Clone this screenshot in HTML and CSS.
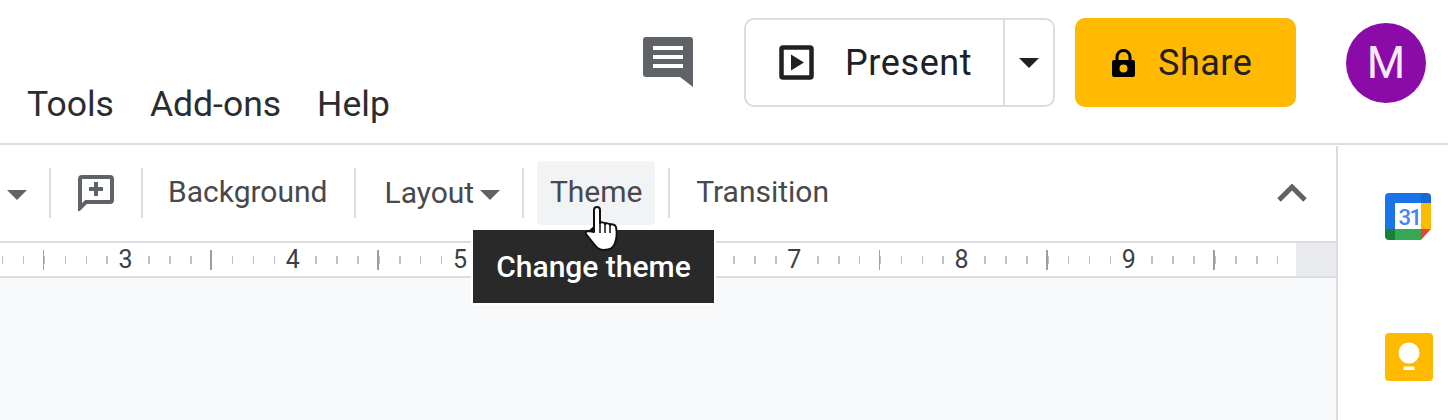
FILE: index.html
```html
<!DOCTYPE html>
<html lang="en">
<head>
    <meta charset="UTF-8">
    <title>Slides toolbar</title>
    <link rel="stylesheet" href="styles.css">
</head>
<body>
    <header class="topbar">
        <nav class="menu">
            <span>Tools</span>
            <span>Add-ons</span>
            <span>Help</span>
        </nav>
        <div class="actions">
            <svg class="comment-icon" viewBox="0 0 50 50">
                <path fill="#5f6368" d="M3 0h44a3 3 0 0 1 3 3v47L37 40H3a3 3 0 0 1-3-3V3a3 3 0 0 1 3-3z"/>
                <path fill="#fff" d="M10 9h30v4H10zM10 18h30v4H10zM10 27h30v4H10z"/>
            </svg>
            <div class="present">
                <div class="present-main">
                    <svg class="present-icon" viewBox="0 0 35 35">
                        <path fill="none" stroke="#202124" stroke-width="4.500" d="M4 2.500h27a1.500 1.500 0 0 1 1.500 1.500v27a1.500 1.500 0 0 1-1.500 1.500H4A1.500 1.500 0 0 1 2.500 31V4A1.500 1.500 0 0 1 4 2.500z"/>
                        <path fill="#202124" d="M12 9.500l13 8-13 8z"/>
                    </svg>
                    <span>Present</span>
                </div>
                <div class="present-more"><i class="caret caret-dark"></i></div>
            </div>
            <div class="share">
                <svg class="lock-icon" viewBox="0 0 23 28">
                    <path fill="#000" fill-rule="evenodd" d="M11.500 0A8 8 0 0 1 19.500 8v3H21a2 2 0 0 1 2 2v13a2 2 0 0 1-2 2H2a2 2 0 0 1-2-2V13a2 2 0 0 1 2-2h1.500V8A8 8 0 0 1 11.500 0zm0 3A5 5 0 0 0 6.500 8v3h10V8a5 5 0 0 0-5-5zm0 12.500a4 4 0 1 0 0 8 4 4 0 0 0 0-8z"/>
                </svg>
                <span>Share</span>
            </div>
            <div class="avatar">M</div>
        </div>
    </header>

    <div class="workspace">
        <main class="editor">
            <div class="toolbar">
                <i class="caret caret-first"></i>
                <i class="sep sep-first"></i>
                <svg class="add-comment" viewBox="0 0 36 36">
                    <path fill="none" stroke="#5f6368" stroke-width="4" d="M4 2h28a2 2 0 0 1 2 2v21a2 2 0 0 1-2 2H8l-6 6V4a2 2 0 0 1 2-2z"/>
                    <path fill="#5f6368" d="M16 7h4v5h5v4h-5v5h-4v-5h-5v-4h5z"/>
                </svg>
                <i class="sep sep-comment"></i>
                <span class="tool">Background</span>
                <i class="sep"></i>
                <span class="tool tool-layout">Layout<i class="caret caret-layout"></i></span>
                <i class="sep sep-layout"></i>
                <span class="tool tool-theme">Theme</span>
                <i class="sep sep-theme"></i>
                <span class="tool">Transition</span>
                <svg class="chevron" viewBox="0 0 30 18">
                    <path fill="none" stroke="#5f6368" stroke-width="5" d="M2 16L15 3l13 13"/>
                </svg>
            </div>
            <div class="ruler">
                <div class="ruler-inches">
                    <span><b>3</b></span>
                    <span><b>4</b></span>
                    <span><b>5</b></span>
                    <span></span>
                    <span><b>7</b></span>
                    <span><b>8</b></span>
                    <span><b>9</b></span>
                </div>
                <div class="ruler-end"></div>
            </div>
            <div class="canvas"></div>
        </main>
        <aside class="sidepanel">
            <svg class="calendar" viewBox="0 0 46 47">
                <path fill="#1a73e8" d="M4 0h32v10H10v26H0V4a4 4 0 0 1 4-4z"/>
                <path fill="#1967d2" d="M36 0h6a4 4 0 0 1 4 4v6H36z"/>
                <path fill="#fbbc04" d="M36 10h10v26H36z"/>
                <path fill="#34a853" d="M10 36h26v11H10z"/>
                <path fill="#188038" d="M0 36h10v11H4a4 4 0 0 1-4-4z"/>
                <path fill="#ea4335" d="M36 47V36h10z"/>
                <text x="24.500" y="31.500" text-anchor="middle" class="calendar-day">31</text>
            </svg>
            <svg class="keep" viewBox="0 0 48 48">
                <rect width="48" height="48" rx="4" fill="#ffba00"/>
                <circle cx="24" cy="20" r="10.500" fill="#fff"/>
                <path fill="#fff" d="M19 25h10v4H19zM18.500 33.500h11V37h-11z"/>
            </svg>
        </aside>
    </div>

    <div class="tooltip">Change theme</div>
    <svg class="hand" viewBox="0 0 33 46">
        <path fill="#111" d="M10 19L2 26l8 3z"/>
        <path fill="#fff" stroke="#111" stroke-width="2" stroke-linejoin="round" d="M12 1c2 0 3 1 3 3v13c1-1 4-1 5 1 1-1 4-1 5 1 1-1 5-1 6 2 1 5 1 11-1 16-1 4-5 7-11 7-5 0-8-3-10-6L1 28c-1-2 1-3 3-3l5 1V4c0-2 1-3 3-3z"/>
        <path stroke="#111" stroke-width="1.500" d="M15 14v13M20 16v11M25 17v10"/>
    </svg>
</body>
</html>
```

FILE: styles.css
```css
body {
    margin: 0;
    width: 1448px;
    height: 420px;
    overflow: hidden;
    position: relative;
    background-color: white;
    font-family: 'Roboto', sans-serif;
    color: #3c4043;
}
.topbar {
    height: 143px;
    display: flex;
    justify-content: space-between;
    border-bottom: 2px solid #dadce0;
}
.menu {
    display: flex;
    gap: 36px;
    padding-left: 27px;
    padding-top: 83px;
    font-size: 35.5px;
    line-height: 42px;
    color: #2b2d30;
}
.actions {
    display: flex;
    align-items: flex-start;
    padding-top: 18px;
    padding-right: 22px;
}
.comment-icon {
    width: 50px;
    height: 50px;
    margin-top: 19px;
    margin-right: 51px;
}
.present {
    width: 311px;
    height: 89px;
    box-sizing: border-box;
    display: flex;
    border: 2px solid #dadce0;
    border-radius: 10px;
}
.present-main {
    width: 259px;
    display: flex;
    align-items: center;
    gap: 31px;
    padding-left: 33px;
    box-sizing: border-box;
    border-right: 2px solid #dadce0;
    font-size: 36px;
    letter-spacing: 0.6px;
    color: #202124;
}
.present-icon {
    width: 35px;
    height: 35px;
}
.present-more {
    flex: 1;
    display: flex;
    align-items: center;
    justify-content: center;
}
.caret {
    display: inline-block;
    width: 0;
    height: 0;
    border-left: 10px solid transparent;
    border-right: 10px solid transparent;
    border-top: 10px solid #5f6368;
}
.caret-dark {
    border-top-color: #202124;
}
.share {
    width: 221px;
    height: 89px;
    margin-left: 20px;
    display: flex;
    align-items: center;
    gap: 23px;
    padding-left: 37px;
    box-sizing: border-box;
    background-color: #ffb900;
    border-radius: 10px;
    font-size: 36px;
    letter-spacing: 0.5px;
    color: #202124;
}
.lock-icon {
    width: 23px;
    height: 28px;
}
.avatar {
    width: 80px;
    height: 80px;
    margin-top: 5px;
    margin-left: 50px;
    border-radius: 50%;
    background-color: #8a0ba8;
    color: #f6e9fa;
    font-size: 44px;
    line-height: 80px;
    text-align: center;
}
.workspace {
    display: flex;
    height: 275px;
}
.editor {
    width: 1336px;
    display: flex;
    flex-direction: column;
}
.toolbar {
    height: 96px;
    display: flex;
    align-items: center;
    font-size: 30px;
    color: #47494d;
}
.caret-first {
    margin-left: 7px;
    margin-top: 4px;
}
.sep {
    width: 2px;
    height: 50px;
    background-color: #dadce0;
    margin: 0 28px 0 27px;
}
.sep-first {
    margin-left: 22px;
    margin-right: 27px;
}
.sep-comment {
    margin-left: 27px;
    margin-right: 25px;
}
.sep-layout {
    margin-left: 22px;
    margin-right: 13px;
}
.sep-theme {
    margin-left: 13px;
    margin-right: 26px;
}
.add-comment {
    width: 36px;
    height: 36px;
}
.tool {
    white-space: nowrap;
    line-height: 62px;
    height: 64px;
}
.tool-layout {
    display: flex;
    align-items: center;
}
.caret-layout {
    margin-left: 6px;
    margin-top: 3px;
}
.tool-theme {
    width: 118px;
    text-align: center;
    background-color: #f1f3f4;
    border-radius: 4px;
}
.chevron {
    width: 30px;
    height: 18px;
    margin-left: auto;
    margin-right: 29px;
}
.ruler {
    height: 33px;
    display: flex;
    border-top: 2px solid #dadce0;
    border-bottom: 2px solid #dadce0;
}
.ruler-inches {
    flex: 1;
    display: flex;
    padding-left: 42px;
    background-color: white;
    background-image:
        repeating-linear-gradient(to right, #9aa0a6 0 1.5px, transparent 1.5px 167.2px),
        repeating-linear-gradient(to right, #bdc1c6 0 1.5px, transparent 1.5px 20.9px);
    background-size: 100% 20px, 100% 8px;
    background-position: 43px center, 1.500px center;
    background-repeat: no-repeat;
}
.ruler-inches span {
    width: 167.2px;
    flex-shrink: 0;
    text-align: center;
    font-size: 25px;
    line-height: 33px;
    color: #3c4043;
}
.ruler-inches b {
    font-weight: normal;
    background-color: white;
    padding: 0 4px;
}
.ruler-end {
    width: 40px;
    background-color: #e8eaed;
}
.canvas {
    flex: 1;
    background-color: #f8f9fa;
}
.sidepanel {
    flex: 1;
    border-left: 2px solid #dadce0;
    margin-top: 1px;
    display: flex;
    flex-direction: column;
    align-items: flex-start;
    padding-left: 47px;
    padding-top: 47px;
}
.calendar {
    width: 46px;
    height: 47px;
}
.calendar-day {
    font-size: 22px;
    font-weight: 500;
    letter-spacing: -1.500px;
    fill: #4285f4;
}
.keep {
    width: 48px;
    height: 48px;
    margin-top: 93px;
}
.tooltip {
    position: absolute;
    left: 473px;
    top: 230px;
    width: 241px;
    height: 73px;
    background-color: #292929;
    outline: 2px solid white;
    color: white;
    font-size: 30px;
    font-weight: 500;
    line-height: 73px;
    text-align: center;
}
.hand {
    position: absolute;
    left: 585px;
    top: 206px;
    width: 33px;
    height: 46px;
}
```
